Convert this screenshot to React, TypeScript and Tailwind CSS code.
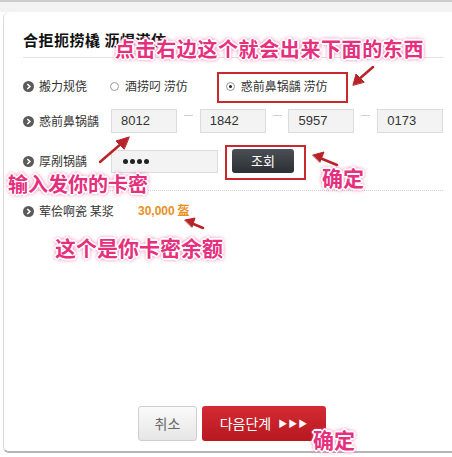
import React from "react";

const pink =
  "absolute whitespace-nowrap font-bold leading-none text-[#e5307e] [font-family:'Noto_Sans_CJK_SC',sans-serif] [text-shadow:1px_1px_0_#fff,-1px_-1px_0_#fff,1px_-1px_0_#fff,-1px_1px_0_#fff,2px_0_0_#fff,-2px_0_0_#fff,0_2px_0_#fff,0_-2px_0_#fff,0_0_3px_#ee5a98,0_0_4px_#ee5a98,0_0_5px_#ee5a98]";

function Bullet() {
  return (
    <svg width="11" height="11" viewBox="0 0 11 11" className="shrink-0">
      <circle cx="5.5" cy="5.5" r="5.5" fill="#5a5a5a" />
      <path d="M4.3 3 L6.9 5.5 L4.3 8" stroke="#fff" strokeWidth="1.6" fill="none" />
    </svg>
  );
}

function Label({ children }: { children: React.ReactNode }) {
  return (
    <div className="flex items-center w-[88px] shrink-0 whitespace-nowrap">
      <Bullet />
      <span className="ml-[5px] text-[12px] text-[#333] leading-none">{children}</span>
    </div>
  );
}

function NumBox({ v }: { v: string }) {
  return (
    <div className="w-[66px] h-[24px] bg-[#f3f3f3] border border-[#dcdcdc] flex items-center pl-[9px] text-[13px] text-[#333] [font-family:'Liberation_Sans',Arial,sans-serif]">
      {v}
    </div>
  );
}

function Dash() {
  return <div className="w-[23px] flex justify-center"><div className="w-[9px] h-[1px] bg-[#cfcfcf] -mt-[6px]" /></div>;
}

export default function App() {
  return (
    <div className="w-[452px] h-[457px] bg-white relative overflow-hidden [font-family:'Noto_Sans_CJK_SC',sans-serif]">
      <div className="h-[12px] bg-[#f3f3f3] border-t-2 border-[#cdcdcd]" />
      <div className="ml-[3px] h-[441px] bg-white border-l border-b-2 border-l-[#dadada] border-b-[#b5b5b5] rounded-tl-[6px] rounded-bl-[6px] flex flex-col pl-[19px] pr-[9px]">
        <div className="pt-[19px] pb-[9px] border-b border-[#e2e2e2]">
          <div className="text-[15px] font-bold text-[#111] leading-[17px] tracking-[0.5px]">合拒扼捞橇 沥焊涝仿</div>
        </div>
        <div className="flex items-center mt-[22px] h-[12px]">
          <Label>搬力规侥</Label>
          <div className="flex items-center text-[12px] text-[#333] -ml-[1px]">
            <span className="w-[9px] h-[9px] rounded-full border border-[#999] bg-white" />
            <span className="ml-[6px]">酒捞叼 涝仿</span>
          </div>
          <div className="flex items-center text-[12px] text-[#333] ml-[38px]">
            <span className="w-[9px] h-[9px] rounded-full border border-[#999] bg-white flex items-center justify-center">
              <span className="w-[3px] h-[3px] rounded-full bg-[#222]" />
            </span>
            <span className="ml-[6px]">惑前鼻锅龋 涝仿</span>
          </div>
        </div>
        <div className="flex items-center mt-[17px]">
          <Label>惑前鼻锅龋</Label>
          <NumBox v="8012" />
          <Dash />
          <NumBox v="1842" />
          <Dash />
          <NumBox v="5957" />
          <Dash />
          <NumBox v="0173" />
        </div>
        <div className="flex items-center mt-[16px]">
          <Label>厚剐锅龋</Label>
          <div className="w-[107px] h-[23px] bg-[#f3f3f3] border border-[#dcdcdc] flex items-center pl-[11px] gap-[2px]" aria-label="●●●●">
            <span className="w-[5px] h-[5px] rounded-full bg-[#222]" />
            <span className="w-[5px] h-[5px] rounded-full bg-[#222]" />
            <span className="w-[5px] h-[5px] rounded-full bg-[#222]" />
            <span className="w-[5px] h-[5px] rounded-full bg-[#222]" />
          </div>
          <div className="ml-[14px] w-[62px] h-[24px] rounded-[3px] bg-gradient-to-b from-[#4c5056] to-[#2c2f33] text-white text-[13px] flex items-center justify-center [font-family:'Noto_Sans_CJK_KR',sans-serif]">조회</div>
        </div>
        <div className="mt-[17px] border-t border-dotted border-[#cfcfcf]" />
        <div className="flex items-center mt-[14px]">
          <Label>荤侩啊瓷 某浆</Label>
          <span className="ml-[27px] -mt-[2px] text-[12px] font-bold text-[#e8901e] leading-none whitespace-nowrap"><span className="[font-family:'Liberation_Sans',Arial,sans-serif]">30,000</span> 盔</span>
        </div>
        <div className="flex-1" />
        <div className="flex justify-center gap-[5px] pb-[10px] pr-[2px]">
          <div className="w-[59px] h-[35px] rounded-[3px] border border-[#cfcfcf] bg-gradient-to-b from-[#fafafa] to-[#e6e6e6] text-[#666] text-[14px] flex items-center justify-center [font-family:'Noto_Sans_CJK_KR',sans-serif]">취소</div>
          <div className="w-[124px] h-[35px] rounded-[3px] bg-gradient-to-b from-[#d42a33] to-[#b71820] text-white text-[14px] flex items-center justify-center gap-[7px] [font-family:'Noto_Sans_CJK_KR',sans-serif]">
            <span>다음단계</span>
            <span className="text-[9px] tracking-[1px]">▶▶▶</span>
          </div>
        </div>
      </div>

      {/* annotations */}
      <div className="absolute left-[217px] top-[72px] w-[131px] h-[31px] border-2 border-[#c8282e]" />
      <div className="absolute left-[225px] top-[145px] w-[81px] h-[35px] border-2 border-[#c8282e]" />
      <svg className="absolute left-0 top-0" width="452" height="457" viewBox="0 0 452 457">
        <g stroke="#b8232a" strokeWidth="2.5" strokeLinecap="round" fill="#b8232a">
          <line x1="373" y1="67" x2="358" y2="80" />
          <polygon points="353,85 356,74 364,82" strokeWidth="1" />
          <line x1="100" y1="162" x2="122" y2="143" />
          <polygon points="129,137 116,141 124,149" strokeWidth="1" />
          <line x1="337" y1="165" x2="320" y2="158" />
          <polygon points="313,155 324,152 320,162" strokeWidth="1" />
          <line x1="203" y1="228" x2="191" y2="223" />
          <polygon points="185,220 195,218 192,227" strokeWidth="1" />
        </g>
      </svg>
      <div className={pink + " left-[115px] top-[39px] text-[20px] tracking-[0.6px]"}>点击右边这个就会出来下面的东西</div>
      <div className={pink + " left-[8px] top-[174px] text-[20px]"}>输入发你的卡密</div>
      <div className={pink + " left-[322px] top-[167px] text-[21px]"}>确定</div>
      <div className={pink + " left-[55px] top-[237px] text-[21px]"}>这个是你卡密余额</div>
      <div className={pink + " left-[313px] top-[429px] text-[21px]"}>确定</div>
    </div>
  );
}
